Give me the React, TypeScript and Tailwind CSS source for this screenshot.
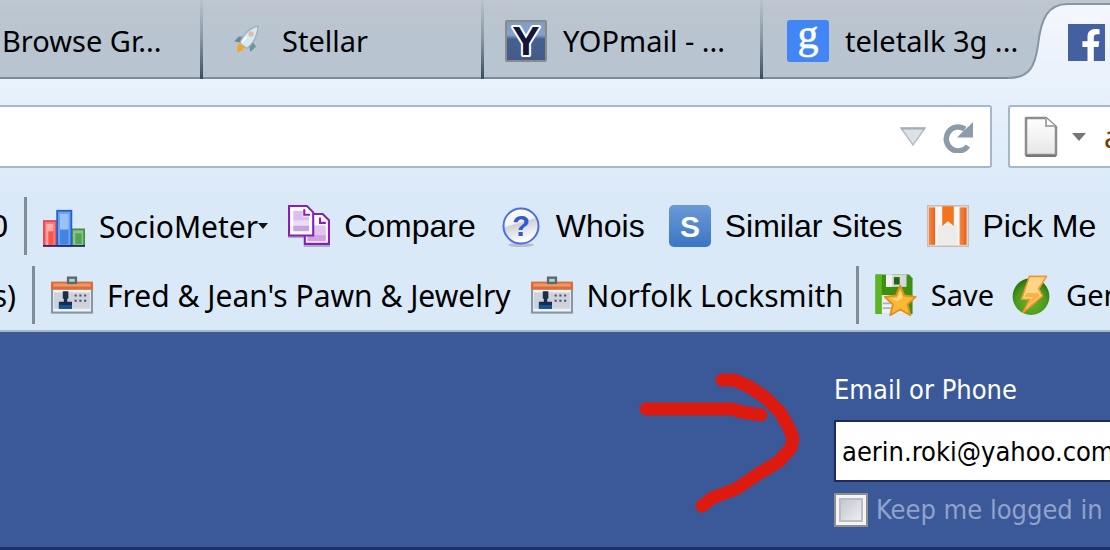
import React from 'react';
import { FaFacebookF } from 'react-icons/fa';

const RocketIcon = () => (
  <svg className="h-[42px] w-[42px] shrink-0" viewBox="0 0 16 16">
    <path d="M3.9 8.1 5.6 6.3 7.4 6.4 6 8.6Z" fill="#6f8794" />
    <path d="M10.8 8 12.2 10.2 10 12.2 9.6 9.8Z" fill="#74909c" />
    <path d="M12.9 2.3C10.2 2.8 7.2 5.4 6 8.9L8.6 10.8C11.4 9 13 5.4 12.9 2.3Z" fill="#d7eaf0" stroke="#9db2bd" strokeWidth="0.5" />
    <circle cx="10.3" cy="5.3" r="1" fill="#e6b9ae" />
    <path d="M6.9 8.3 8.6 6.5" stroke="#fff" strokeWidth="0.7" />
    <path d="M5.2 9.2 7.8 9.9 7.2 11.4 5 12.3Z" fill="#f7a521" />
  </svg>
);

const YopIcon = () => (
  <svg className="h-[42px] w-[42px] shrink-0 overflow-visible" viewBox="0 0 42 42">
    <defs>
      <linearGradient id="yop" x1="0" y1="0" x2="0" y2="1">
        <stop offset="0" stopColor="#7f9cc6" />
        <stop offset="0.35" stopColor="#86a2c8" />
        <stop offset="0.45" stopColor="#45608f" />
        <stop offset="1" stopColor="#435a8a" />
      </linearGradient>
    </defs>
    <rect x="1" y="1" width="40" height="40" rx="1" fill="url(#yop)" stroke="#8a8a88" strokeWidth="2" />
    <text x="21" y="35" textAnchor="middle" fontSize="41" fontWeight="700" fontFamily="Liberation Sans, sans-serif" fill="#14143c" stroke="#fff" strokeWidth="4" paintOrder="stroke" strokeLinejoin="round">Y</text>
  </svg>
);

const GoogleIcon = () => (
  <svg className="h-[42px] w-[42px] shrink-0 overflow-visible" viewBox="0 0 42 42">
    <rect width="42" height="42" rx="3" fill="#4285f4" />
    <text x="21" y="28" textAnchor="middle" fontSize="42" fontFamily="Liberation Serif, serif" fill="#fff" stroke="#fff" strokeWidth="0.6">g</text>
  </svg>
);

const ChartIcon = () => (
  <svg className="h-[42px] w-[42px] shrink-0" viewBox="0 0 16 16">
    <rect x="0.35" y="6.1" width="4.7" height="9.5" fill="#ff7474" stroke="#e24b56" strokeWidth="0.7" />
    <rect x="1.3" y="7.2" width="2.6" height="8" fill="#ffb0a8" />
    <rect x="2" y="10" width="2" height="5.2" fill="#f9554f" />
    <rect x="11" y="9.3" width="4.7" height="6.3" fill="#8cc084" stroke="#3d9248" strokeWidth="0.7" />
    <rect x="12.3" y="10.8" width="2.4" height="4" fill="#54a455" />
    <rect x="5.4" y="2.2" width="5.4" height="13.4" fill="#6fa3ea" stroke="#2262d0" strokeWidth="0.7" />
    <rect x="6.5" y="3.4" width="3.2" height="6" fill="#9bc2f4" />
    <rect x="6.5" y="9.4" width="3.2" height="5.6" fill="#4284e0" />
    <path d="M0 15.6H16" stroke="#25306e" strokeWidth="0.7" />
  </svg>
);

const CompareIcon = () => (
  <svg className="h-[42px] w-[42px] shrink-0" viewBox="0 0 16 16">
    <path d="M0 12.2H6M6 15.6H16" stroke="#a9b0bd" strokeWidth="0.8" />
    <path d="M6.4 3.4H13.2L15.6 5.8V14.8H6.4Z" fill="#fff" stroke="#8a1fb8" strokeWidth="0.8" />
    <path d="M7.4 7.8H14.4V13.8H7.4Z" fill="#e0c4ee" />
    <path d="M7.4 11.5H14.4V13.8H7.4Z" fill="#cda4e2" />
    <path d="M12.2 4.8V6.8H14.4" fill="none" stroke="#8a1fb8" strokeWidth="0.8" />
    <path d="M0.4 0.4H7.2L9.6 2.8V11.6H0.4Z" fill="#fff" stroke="#8a1fb8" strokeWidth="0.8" />
    <path d="M2 2.2H5.6V4.4H8V6H2Z" fill="#dcc0ec" />
    <path d="M2 6H8V7.6H2Z" fill="#ecdcf5" />
    <path d="M2 7.8H8V10H2Z" fill="#c9a3e0" />
    <path d="M6.2 1.6V3.7H8.4" fill="none" stroke="#8a1fb8" strokeWidth="0.8" />
  </svg>
);

const WhoisIcon = () => (
  <svg className="h-[42px] w-[42px] shrink-0" viewBox="0 0 42 42">
    <defs>
      <linearGradient id="whois" x1="0" y1="0" x2="0.3" y2="1">
        <stop offset="0" stopColor="#fff" />
        <stop offset="0.48" stopColor="#f2f3f6" />
        <stop offset="0.52" stopColor="#cfd1d8" />
        <stop offset="1" stopColor="#fff" />
      </linearGradient>
    </defs>
    <ellipse cx="21" cy="40" rx="13" ry="2" fill="#b9bfcb" />
    <circle cx="21" cy="21" r="17.5" fill="url(#whois)" stroke="#4a70e2" strokeWidth="2" />
    <text x="21" y="31" textAnchor="middle" fontSize="29" fontWeight="700" fontFamily="Liberation Sans, sans-serif" fill="#3358cf">?</text>
  </svg>
);

const SimilarIcon = () => (
  <svg className="h-[42px] w-[42px] shrink-0" viewBox="0 0 42 42">
    <defs>
      <linearGradient id="similar" x1="0" y1="0" x2="0" y2="1">
        <stop offset="0" stopColor="#6b9ad6" />
        <stop offset="1" stopColor="#3a76c4" />
      </linearGradient>
    </defs>
    <rect width="42" height="42" rx="5" fill="url(#similar)" />
    <text x="21" y="32" textAnchor="middle" fontSize="30" fontWeight="700" fontFamily="Liberation Sans, sans-serif" fill="#fff">S</text>
  </svg>
);

const PickIcon = () => (
  <svg className="h-[42px] w-[42px] shrink-0" viewBox="0 0 16 16">
    <defs>
      <linearGradient id="pick" x1="0" y1="0" x2="1" y2="0">
        <stop offset="0" stopColor="#f58a44" />
        <stop offset="1" stopColor="#e4611d" />
      </linearGradient>
    </defs>
    <rect x="0.3" y="0.3" width="15.4" height="15.4" fill="#f7f6f4" stroke="#c9bdb6" strokeWidth="0.6" />
    <rect x="0.7" y="0.9" width="2.4" height="14.3" fill="url(#pick)" />
    <rect x="12.4" y="0.9" width="2.7" height="14.3" fill="url(#pick)" />
    <path d="M4 7.6H11.6V15.2H4Z" fill="#ececeb" />
    <path d="M5.8 0.5H10.2V8L8 6.2 5.8 8Z" fill="#f2741f" />
  </svg>
);

const CardIcon = () => (
  <svg className="h-[42px] w-[42px] shrink-0" viewBox="0 0 16 16">
    <rect x="0.4" y="5.4" width="15.2" height="9.3" fill="#eef0f2" stroke="#8398a5" strokeWidth="0.8" />
    <rect x="1.2" y="7" width="13.6" height="6.2" fill="#cdd2dc" />
    <rect x="0" y="2.9" width="16" height="3.1" fill="#dc6b3a" />
    <rect x="0.9" y="3.6" width="14.2" height="1.2" fill="#ec9a62" />
    <rect x="6.5" y="1.4" width="3" height="2" fill="#c3cdd0" stroke="#546c70" strokeWidth="0.9" />
    <path d="M4.5 6.6H6.6V9.4H6.2V10.6H8V13.2H3V10.6H4.9V9.4H4.5Z" fill="#1a2c48" />
    <path d="M3 11.8H8V13.2H3Z" fill="#12549c" />
    <path d="M9 8.2H14.4M9 10.2H13.4" stroke="#4a4d66" strokeWidth="0.7" strokeDasharray="0.8 1" />
  </svg>
);

const SaveIcon = () => (
  <svg className="h-[42px] w-[42px] shrink-0" viewBox="0 0 16 16">
    <path d="M0.2 0.2H13L14.3 1.6V15.2H0.2Z" fill="#3d8f12" />
    <path d="M0.2 0.2H2.6V15.2H0.2Z" fill="#5cb521" />
    <path d="M4.2 0.2H12V4.9H4.2Z" fill="#d6d7dc" />
    <path d="M4.2 0.2H6.5V4.9H4.2Z" fill="#f1f1f4" />
    <path d="M7.2 1.2H9.4V4H7.2Z" fill="#24630d" />
    <path d="M2.6 8H12V15.2H2.6Z" fill="#eef0f2" />
    <path d="M3 11.2H7M3 13H6" stroke="#a9b2bc" strokeWidth="0.7" />
    <path d="M9.6 4.4 11.2 8.2 15.5 8.7 12.4 11.6 13.5 15.7 9.6 13.5 5.8 15.7 6.8 11.6 3.7 8.7 8 8.2Z" fill="#fbb735" stroke="#e0901e" strokeWidth="0.7" strokeLinejoin="round" />
    <path d="M9.6 6.3 10.6 9 8.4 10.4 6 9.4 8.5 9Z" fill="#ffd877" />
  </svg>
);

const BoltIcon = () => (
  <svg className="h-[42px] w-[42px] shrink-0" viewBox="0 0 16 16">
    <defs>
      <radialGradient id="bolt" cx="0.5" cy="0.65" r="0.6">
        <stop offset="0" stopColor="#6cb32c" />
        <stop offset="0.7" stopColor="#4a981d" />
        <stop offset="1" stopColor="#2f740f" />
      </radialGradient>
    </defs>
    <circle cx="8" cy="8.6" r="7" fill="url(#bolt)" />
    <path d="M7.4 0.9H13.9L10.9 5.7 12.4 8.3 5 14.6 7.6 9.6H4.4Z" fill="#ffd58a" stroke="#f19a2a" strokeWidth="0.6" strokeLinejoin="round" />
    <path d="M6.4 7.2H10.8L11.4 8.4 6.4 12.8 8.6 8.8H5.4Z" fill="#fab146" />
  </svg>
);

const ReloadIcon = () => (
  <svg className="h-8 w-8" viewBox="0 0 32 32">
    <path d="M26 25A12 12 0 1 1 23 8" fill="none" stroke="#8c9baa" strokeWidth="5.5" />
    <path d="M31 1V16.500H15L21 10.500 26 6Z" fill="#8c9baa" />
  </svg>
);

const PageIcon = () => (
  <svg className="h-[42px] w-[34px] shrink-0" viewBox="0 0 34 42">
    <defs>
      <linearGradient id="page" x1="0" y1="0" x2="0" y2="1">
        <stop offset="0" stopColor="#fff" />
        <stop offset="1" stopColor="#e6e6e6" />
      </linearGradient>
    </defs>
    <path d="M2 2H22L32 11V39H2Z" fill="url(#page)" stroke="#8d8d8d" strokeWidth="2.500" strokeLinejoin="round" />
    <path d="M22 2V10H31" fill="#fff" stroke="#aaa" strokeWidth="2" />
    <path d="M2 40H32" stroke="#777" strokeWidth="2" />
  </svg>
);

type TabProps = { icon?: React.ReactNode; title: string; className: string };

const Tab = ({ icon, title, className }: TabProps) => (
  <button className={`relative flex shrink-0 items-center gap-4 border-b-2 border-[#7b8d9b] pt-1 text-left text-[29px] whitespace-nowrap text-black ${className}`}>
    {icon}
    <span>{title}</span>
  </button>
);

const TabDivider = () => (
  <div className="w-[3px] shrink-0 bg-linear-to-b from-[#b9c3cd] via-[#8795a3] to-[#3b4d5b]" />
);

const Divider = () => <div className="h-[58px] w-[3px] shrink-0 bg-[#828c96]" />;

type ToolProps = { icon: React.ReactNode; label: string; className?: string };

const Tool = ({ icon, label, className = '' }: ToolProps) => (
  <button className={`flex shrink-0 items-center gap-3.5 whitespace-nowrap text-black ${className}`}>
    {icon}
    <span>{label}</span>
  </button>
);

const App = () => {
  return (
    <div className="w-full overflow-hidden bg-[#dae9f8] font-['Noto_Sans',sans-serif]">
      {/* Tab strip */}
      <div className="flex h-[79px] bg-linear-to-b from-[#bec6cf] via-[#b8c4d0] to-[#b8c5d1]">
        <Tab className="w-[200px] pl-0.5" title="Browse Gr..." />
        <TabDivider />
        <Tab className="w-[278px] pl-[21px]" icon={<RocketIcon />} title="Stellar" />
        <TabDivider />
        <Tab className="w-[276px] pl-[21px]" icon={<YopIcon />} title="YOPmail - ..." />
        <TabDivider />
        <Tab className="w-[245px] pl-6" icon={<GoogleIcon />} title="teletalk 3g ..." />
        <svg className="h-[79px] w-[60px] shrink-0" viewBox="0 0 60 79">
          <defs>
            <linearGradient id="tab" x1="0" y1="0" x2="0" y2="1">
              <stop offset="0" stopColor="#f4f7fd" />
              <stop offset="1" stopColor="#e9f1fb" />
            </linearGradient>
          </defs>
          <path d="M0 79C22 79 27 66 30 45C33 18 40 4 60 4V79Z" fill="url(#tab)" />
          <path d="M0 78C22 78 27 66 30 45C33 18 40 4 60 4" fill="none" stroke="#8795a4" strokeWidth="2" />
        </svg>
        <button aria-label="Facebook" className="mt-[3px] flex flex-1 items-center border-t-2 border-[#8795a4] bg-linear-to-b from-[#f4f7fd] to-[#e9f1fb]">
          <span className="flex h-[37px] w-[37px] shrink-0 items-end justify-end bg-[#4460a0] pr-1">
            <FaFacebookF className="h-8 w-5 text-white" preserveAspectRatio="none" />
          </span>
        </button>
      </div>

      {/* Address and search */}
      <div className="flex gap-4 bg-linear-to-b from-[#e9f2fc] to-[#dae9f8] pt-[26px] pb-[29px]">
        <div className="flex h-[63px] flex-1 items-center gap-4 rounded-r-[3px] border-2 border-l-0 border-[#a4b7cd] bg-white pr-4">
          <input aria-label="Address" type="text" className="h-full min-w-0 flex-1 outline-none" />
          <button aria-label="History">
            <svg className="h-5 w-[26px]" viewBox="0 0 26 20">
              <path d="M1 1H25L13 18Z" fill="#dce1e7" stroke="#b6bec7" strokeWidth="1.500" />
              <path d="M1 1.500H25" stroke="#a3adb8" strokeWidth="2" />
            </svg>
          </button>
          <button aria-label="Reload">
            <ReloadIcon />
          </button>
        </div>
        <div className="flex h-[63px] w-[102px] shrink-0 items-center gap-3.5 overflow-hidden rounded-l-[3px] border-2 border-r-0 border-[#a4b7cd] bg-white pl-3.5">
          <PageIcon />
          <button aria-label="Search engine">
            <svg className="h-2 w-3.5" viewBox="0 0 14 8">
              <path d="M0 0H14L7 8Z" fill="#777" />
            </svg>
          </button>
          <input aria-label="Search" type="text" defaultValue="a" className="ml-1 w-10 shrink-0 text-[30px] text-[#7a3a00] outline-none" />
        </div>
      </div>

      {/* Toolbars */}
      <div className="flex flex-col gap-[11px] border-b-2 border-[#a3b4cb] pb-1.5">
        <div className="flex items-center gap-6 font-['Liberation_Sans',sans-serif] text-[32px]">
          <div className="-mr-1 flex shrink-0 items-center gap-4">
            <div className="flex w-2 justify-end overflow-hidden">
              <span>0</span>
            </div>
            <Divider />
            <div className="flex items-center">
              <Tool className="font-['Noto_Sans',sans-serif] text-[30px]" icon={<ChartIcon />} label="SocioMeter" />
              <svg className="h-1.5 w-2.5" viewBox="0 0 10 6">
                <path d="M0 0H10L5 6Z" fill="#111" />
              </svg>
            </div>
          </div>
          <Tool icon={<CompareIcon />} label="Compare" />
          <Tool icon={<WhoisIcon />} label="Whois" />
          <Tool icon={<SimilarIcon />} label="Similar Sites" />
          <Tool icon={<PickIcon />} label="Pick Me" />
        </div>
        <div className="flex items-center gap-4 text-[30px]">
          <div className="flex w-4 shrink-0 justify-end overflow-hidden">
            <span>s)</span>
          </div>
          <Divider />
          <div className="-mr-1 flex shrink-0 items-center gap-5">
            <Tool icon={<CardIcon />} label="Fred &amp; Jean's Pawn &amp; Jewelry" />
            <Tool icon={<CardIcon />} label="Norfolk Locksmith" />
          </div>
          <Divider />
          <Tool className="text-[29px]" icon={<SaveIcon />} label="Save" />
          <Tool className="text-[29px]" icon={<BoltIcon />} label="Gen" />
        </div>
      </div>

      {/* Login header */}
      <div className="relative flex h-[218px] justify-end border-b-[3px] border-[#1d2f68] bg-[#3b5998] font-['DejaVu_Sans_Condensed','Noto_Sans',sans-serif] text-[27px]">
        <svg className="absolute top-10 right-[304px] h-[146px] w-[170px]" viewBox="0 0 170 146" fill="none" stroke="#dd1a10" strokeWidth="13" strokeLinecap="round" strokeLinejoin="round">
          <path d="M10 37H96L106 40 125 43" />
          <path d="M86 8H98L112 14 130 26 144 40 153 56 157 66 155 76 142 90 122 102 100 117 76 126 66 134" />
        </svg>
        <form className="flex w-[276px] flex-col items-start overflow-hidden pt-10">
          <label htmlFor="email" className="leading-9 text-white">Email or Phone</label>
          <input id="email" type="text" defaultValue="aerin.roki@yahoo.com" className="mt-3 h-[62px] w-[340px] border-2 border-[#1d2a5b] bg-white px-1.5 text-black outline-none" />
          <label className="mt-2.5 flex items-center gap-2 leading-9 whitespace-nowrap text-[#8fa3cc]">
            <input type="checkbox" className="h-[34px] w-[34px] appearance-none border-2 border-[#8f8f8d] bg-linear-to-br from-[#b9bfc9] to-[#f6f6f6] shadow-[inset_0_0_0_3px_#f4f4f4,inset_0_0_0_5px_#b9bdc4]" />
            Keep me logged in
          </label>
        </form>
      </div>
    </div>
  );
};

export default App;
